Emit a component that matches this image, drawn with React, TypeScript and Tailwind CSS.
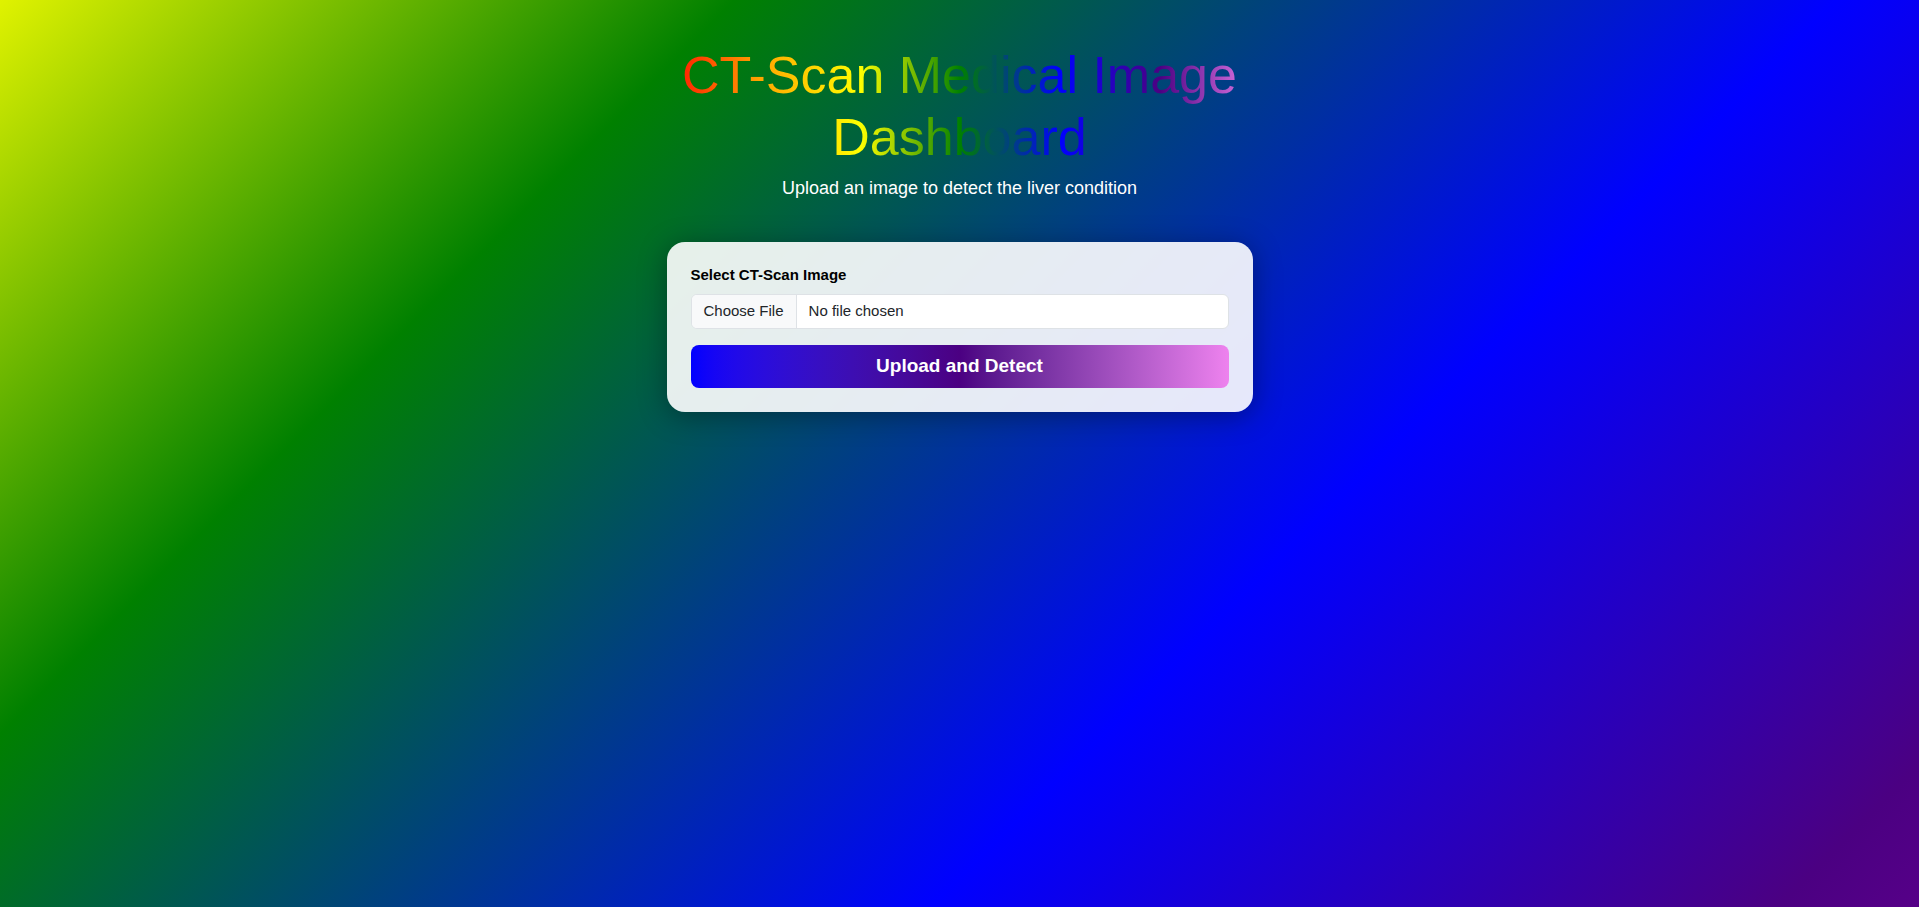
import React from 'react';

const App = () => {
    return (
        <div className="min-h-screen w-full bg-[linear-gradient(135deg,#e0f200_0%,#008000_26%,#0000ff_65%,#4b0082_95%,#560088_100%)] font-['Liberation_Sans',Arial,sans-serif]">
            <div className="flex flex-col items-center">
                {/* Header */}
                <div className="w-[600px] text-center">
                    <h1 className="mt-[44px] mb-[6px] text-[52px] leading-[1.2] font-normal bg-[linear-gradient(to_right,#ff0000,orange,yellow,green,blue,indigo,violet)] bg-clip-text text-transparent">
                        CT-Scan Medical Image Dashboard
                    </h1>
                    <p className="text-white text-[18px] leading-[27px]">
                        Upload an image to detect the liver condition
                    </p>
                </div>

                {/* Upload card */}
                <form
                    className="mt-10 w-[586px] rounded-[18px] bg-white/90 px-6 pt-[22px] pb-6 shadow-[0_4px_28px_rgba(0,0,0,0.35)]"
                    onSubmit={(e) => e.preventDefault()}
                >
                    <div className="mb-2 text-[15px] leading-[22px] font-bold text-black">
                        Select CT-Scan Image
                    </div>
                    <label className="flex h-[35px] w-full cursor-pointer items-center overflow-hidden rounded-md border border-[#dee2e6] bg-white text-[15px] text-[#212529]">
                        <input type="file" accept="image/*" className="sr-only" />
                        <span className="flex h-full items-center border-r border-[#dee2e6] bg-[#f8f9fa] px-3">
                            Choose File
                        </span>
                        <span className="px-3">No file chosen</span>
                    </label>
                    <button
                        type="submit"
                        className="mt-4 flex h-[43px] w-full items-center justify-center rounded-lg bg-linear-to-r from-[#0000ff] via-[#4b0082] to-[#ee82ee] text-[19px] font-bold text-white"
                    >
                        Upload and Detect
                    </button>
                </form>
            </div>
        </div>
    );
};

export default App;
